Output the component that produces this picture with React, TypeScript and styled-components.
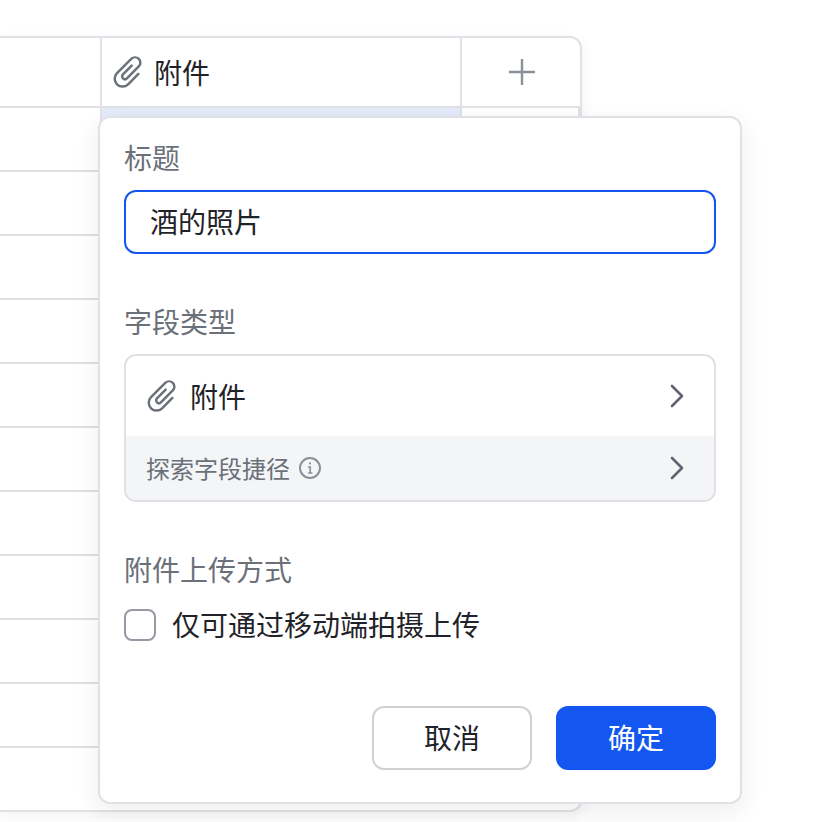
import React, { FC } from 'react';
import styled, { createGlobalStyle } from 'styled-components';

const GlobalStyle = createGlobalStyle`
  html, body {
    margin: 0;
    padding: 0;
    background-color: #ffffff;
  }
  body {
    font-family: "Noto Sans CJK SC", "Noto Sans", sans-serif;
  }
`;

const Page = styled.div`
  position: relative;
  width: 822px;
  height: 822px;
  overflow: hidden;
  padding-top: 36px;
  box-sizing: border-box;
  background-color: #ffffff;
`;

const Table = styled.div`
  box-sizing: border-box;
  width: 582px;
  height: 776px;
  border: 2px solid #e0e1e6;
  border-left: 0;
  border-radius: 0 12px 12px 0;
  background-color: #ffffff;
  box-shadow: 0 4px 14px rgba(31, 35, 41, 0.06);
  display: flex;
  flex-direction: column;
`;

const HeaderRow = styled.div`
  display: grid;
  grid-template-columns: 102px 360px 118px;
  height: 70px;
  flex-shrink: 0;
  box-sizing: border-box;
  border-bottom: 2px solid #e0e1e6;
`;

const Row = styled.div`
  display: grid;
  grid-template-columns: 102px 360px 118px;
  height: 64px;
  flex-shrink: 0;
  box-sizing: border-box;
  border-bottom: 2px solid #e0e1e6;
`;

const Cell = styled.div<{ $selected?: boolean }>`
  box-sizing: border-box;
  border-right: 2px solid #e0e1e6;
  background-color: ${p => (p.$selected ? '#e3ebfa' : 'transparent')};
`;

const FieldCell = styled.div`
  box-sizing: border-box;
  display: flex;
  align-items: center;
  gap: 10px;
  padding-left: 10px;
  border-right: 2px solid #e0e1e6;
  font-size: 28px;
  color: #1f2329;
`;

const AddCell = styled.div`
  display: flex;
  align-items: center;
  justify-content: center;
  padding-left: 2px;
`;

const Popup = styled.div`
  position: absolute;
  left: 98px;
  top: 116px;
  box-sizing: border-box;
  width: 644px;
  height: 688px;
  padding: 22px 24px 32px;
  border: 2px solid #e0e1e6;
  border-radius: 12px;
  background-color: #ffffff;
  box-shadow: 0 8px 24px rgba(31, 35, 41, 0.08);
  display: flex;
  flex-direction: column;
`;

const Label = styled.div<{ $top?: number }>`
  font-size: 28px;
  line-height: 34px;
  color: #6b7079;
  margin-top: ${p => p.$top ?? 0}px;
`;

const TitleInput = styled.input`
  box-sizing: border-box;
  width: 100%;
  height: 64px;
  margin-top: 16px;
  padding: 0 24px 2px;
  border: 2px solid #1456f0;
  border-radius: 12px;
  outline: 0;
  font-family: inherit;
  font-size: 28px;
  color: #1f2329;
  background-color: #ffffff;
`;

const TypeBox = styled.div`
  box-sizing: border-box;
  height: 148px;
  margin-top: 16px;
  border: 2px solid #e0e1e6;
  border-radius: 12px;
  overflow: hidden;
`;

const TypeRow = styled.div`
  display: flex;
  align-items: center;
  height: 80px;
  padding: 0 29px 0 20px;
  gap: 12px;
  font-size: 28px;
  color: #1f2329;
`;

const ShortcutRow = styled.div`
  display: flex;
  align-items: center;
  height: 64px;
  padding: 0 29px 0 20px;
  gap: 8px;
  font-size: 24px;
  color: #6b7079;
  background-color: #f4f5f7;
`;

const Grow = styled.div`
  flex: 1;
`;

const CheckRow = styled.label`
  display: flex;
  align-items: center;
  gap: 16px;
  margin-top: 20px;
  font-size: 28px;
  line-height: 36px;
  color: #1f2329;
`;

const RaisedText = styled.span`
  margin-bottom: 2px;
`;

const CheckBox = styled.span`
  box-sizing: border-box;
  width: 32px;
  height: 32px;
  border: 2px solid #9499a3;
  border-radius: 8px;
  background-color: #ffffff;
`;

const Footer = styled.div`
  display: flex;
  justify-content: flex-end;
  gap: 24px;
  margin-top: auto;
`;

const Button = styled.button<{ $primary?: boolean }>`
  box-sizing: border-box;
  width: 160px;
  height: 64px;
  padding: 0 0 2px;
  border-radius: 12px;
  border: 2px solid ${p => (p.$primary ? '#1456f0' : '#d0d1d5')};
  background-color: ${p => (p.$primary ? '#1456f0' : '#ffffff')};
  color: ${p => (p.$primary ? '#ffffff' : '#1f2329')};
  font-family: inherit;
  font-size: 28px;
`;

const Clip: FC = () => (
  <svg width="32" height="32" viewBox="0 0 32 32" fill="none" stroke="#6b7079" strokeLinecap="round" strokeLinejoin="round">
    <g transform="translate(16.9 16.4) rotate(45) scale(1.12)" strokeWidth="2.2">
      <path d="M7 -5V8a7 7 0 0 1-14 0V-10a4.75 4.75 0 0 1 9.5 0V5a2.5 2.5 0 0 1-5 0V-6" />
    </g>
  </svg>
);

const Chevron: FC = () => (
  <svg width="16" height="24" viewBox="0 0 16 24" fill="none" stroke="#5f646d" strokeWidth="2.6" strokeLinecap="round" strokeLinejoin="round">
    <path d="M3 2l10 10L3 22" />
  </svg>
);

const Info: FC = () => (
  <svg width="24" height="24" viewBox="0 0 24 24" fill="none" stroke="#8a8f98" strokeWidth="2">
    <circle cx="12" cy="12" r="10" />
    <path d="M10 11h2.2v6M10 17h4.4" strokeWidth="1.6" />
    <circle cx="12" cy="7.4" r="1.1" fill="#8a8f98" stroke="none" />
  </svg>
);

const Plus: FC = () => (
  <svg width="28" height="28" viewBox="0 0 28 28" fill="none" stroke="#8a8f98" strokeWidth="2.4">
    <path d="M14 1v26M1 14h26" />
  </svg>
);

const App: FC = () => {
  const rows = [0, 1, 2, 3, 4, 5, 6, 7, 8, 9];

  return (
    <Page>
      <GlobalStyle />
      <Table>
        <HeaderRow>
          <Cell />
          <FieldCell>
            <Clip />
            附件
          </FieldCell>
          <AddCell>
            <Plus />
          </AddCell>
        </HeaderRow>
        {rows.map(i => (
          <Row key={i}>
            <Cell />
            <Cell $selected={i === 0} />
            <Cell />
          </Row>
        ))}
      </Table>

      <Popup>
        <Label>标题</Label>
        <TitleInput defaultValue="酒的照片" />
        <Label $top={50}>字段类型</Label>
        <TypeBox>
          <TypeRow>
            <Clip />
            附件
            <Grow />
            <Chevron />
          </TypeRow>
          <ShortcutRow>
            <RaisedText>探索字段捷径</RaisedText>
            <Info />
            <Grow />
            <Chevron />
          </ShortcutRow>
        </TypeBox>
        <Label $top={50}>附件上传方式</Label>
        <CheckRow>
          <CheckBox />
          <RaisedText>仅可通过移动端拍摄上传</RaisedText>
        </CheckRow>
        <Footer>
          <Button>取消</Button>
          <Button $primary>确定</Button>
        </Footer>
      </Popup>
    </Page>
  );
};

export default App;
